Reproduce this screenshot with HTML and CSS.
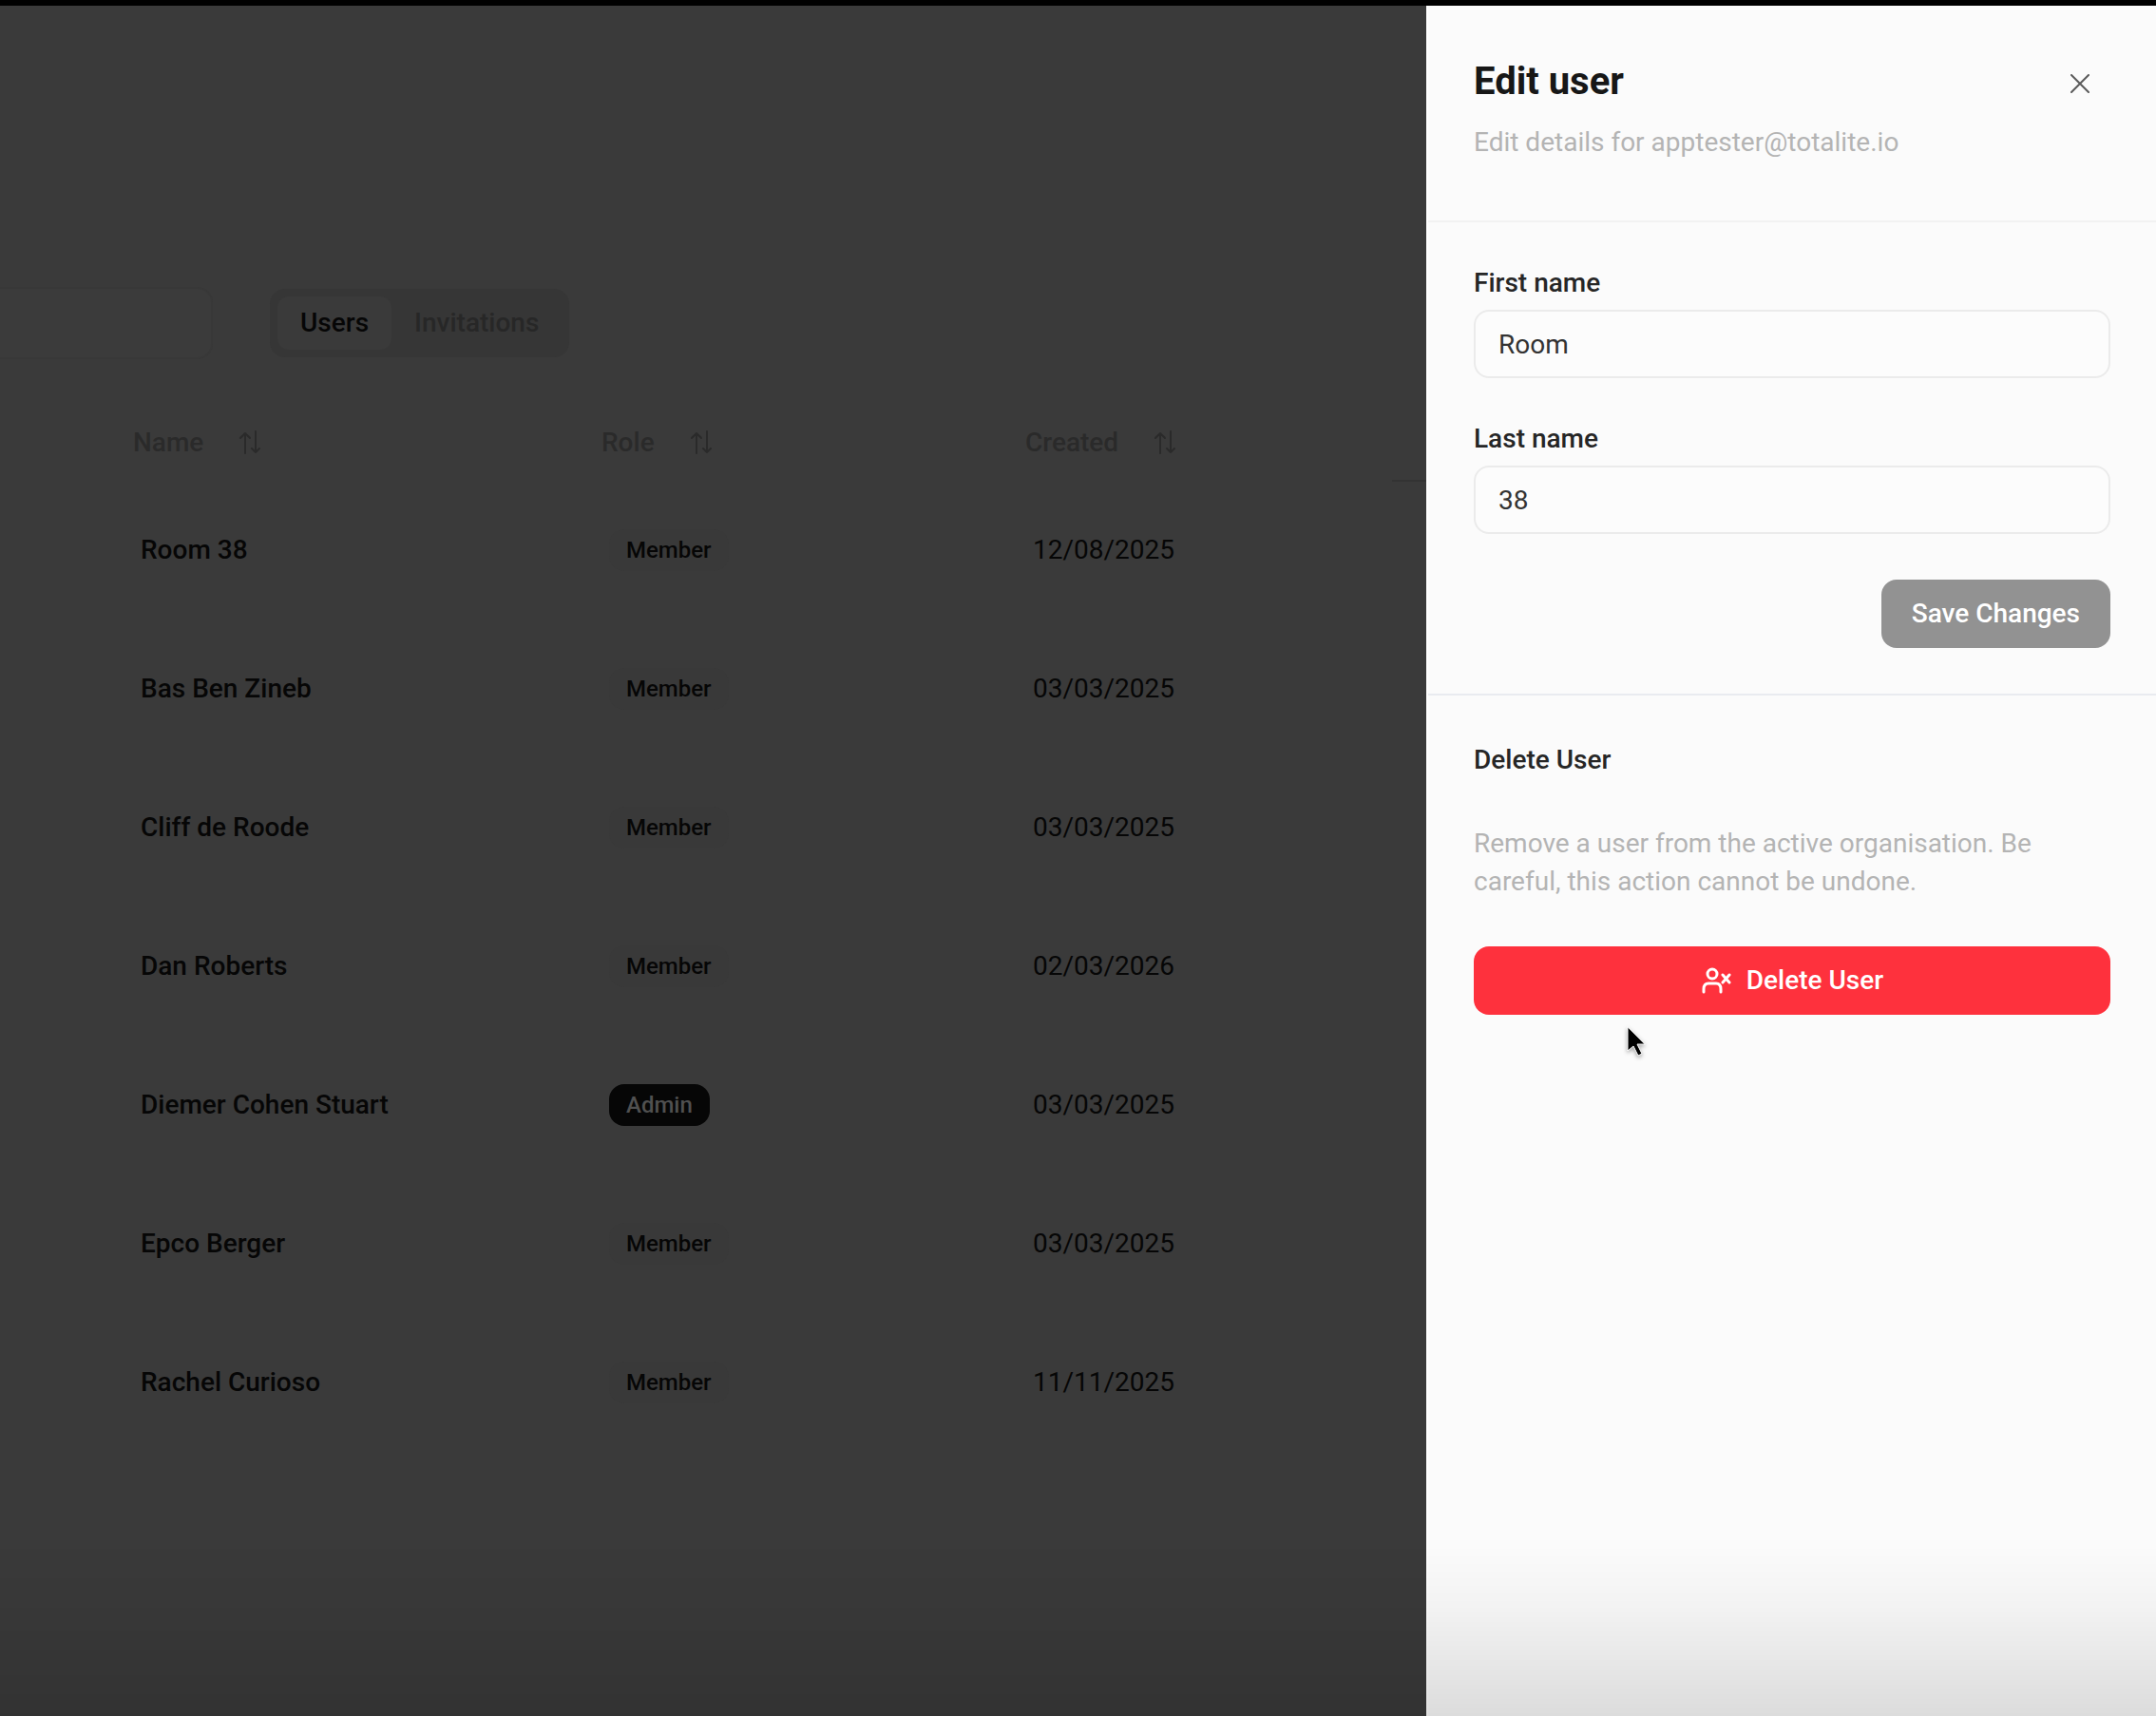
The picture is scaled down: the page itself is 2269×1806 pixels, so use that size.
FILE: index.html
```html
<!DOCTYPE html>
<html lang="en">
<head>
<meta charset="utf-8">
<title>Edit user</title>
<link rel="stylesheet" href="styles.css">
</head>
<body>
<svg class="sprite" aria-hidden="true">
  <symbol id="sort" viewBox="0 0 24 26"><path d="M2 8l5-5 5 5M7 3v21M14 19l4 4 4-4M18 23V1"/></symbol>
</svg>
<div class="app">
  <main class="page">
    <div class="toolbar">
      <input class="search" type="search" aria-label="Search users">
      <div class="tabs" role="tablist">
        <button class="tab tab-active" role="tab" aria-selected="true">Users</button>
        <button class="tab" role="tab" aria-selected="false">Invitations</button>
      </div>
    </div>
    <table class="users">
      <colgroup><col class="col-name"><col class="col-role"><col class="col-created"><col></colgroup>
      <thead>
        <tr>
          <th scope="col"><button class="sort">Name <svg class="sort-icon"><use href="#sort"/></svg></button></th>
          <th scope="col"><button class="sort">Role <svg class="sort-icon"><use href="#sort"/></svg></button></th>
          <th scope="col"><button class="sort">Created <svg class="sort-icon"><use href="#sort"/></svg></button></th>
          <td class="actions"></td>
        </tr>
      </thead>
      <tbody>
        <tr><td class="name">Room 38</td><td><span class="badge">Member</span></td><td>12/08/2025</td><td></td></tr>
        <tr><td class="name">Bas Ben Zineb</td><td><span class="badge">Member</span></td><td>03/03/2025</td><td></td></tr>
        <tr><td class="name">Cliff de Roode</td><td><span class="badge">Member</span></td><td>03/03/2025</td><td></td></tr>
        <tr><td class="name">Dan Roberts</td><td><span class="badge">Member</span></td><td>02/03/2026</td><td></td></tr>
        <tr><td class="name">Diemer Cohen Stuart</td><td><span class="badge badge-admin">Admin</span></td><td>03/03/2025</td><td></td></tr>
        <tr><td class="name">Epco Berger</td><td><span class="badge">Member</span></td><td>03/03/2025</td><td></td></tr>
        <tr><td class="name">Rachel Curioso</td><td><span class="badge">Member</span></td><td>11/11/2025</td><td></td></tr>
      </tbody>
    </table>
  </main>
  <aside class="sheet" role="dialog" aria-labelledby="sheet-title">
    <header class="sheet-header">
      <div>
        <h1 class="sheet-title" id="sheet-title">Edit user</h1>
        <p class="muted">Edit details for apptester@totalite.io</p>
      </div>
      <button class="close" aria-label="Close"><svg class="close-icon" viewBox="0 0 20 20"><path d="M1 1l18 18M19 1L1 19"/></svg></button>
    </header>
    <form class="section form">
      <div class="field">
        <label class="label" for="first-name">First name</label>
        <input class="input" id="first-name" type="text" value="Room">
      </div>
      <div class="field">
        <label class="label" for="last-name">Last name</label>
        <input class="input" id="last-name" type="text" value="38">
      </div>
      <button class="button save" type="submit" disabled>Save Changes</button>
    </form>
    <section class="section danger">
      <h2 class="section-title">Delete User</h2>
      <p class="muted">Remove a user from the active organisation. Be careful, this action cannot be undone.</p>
      <button class="button delete" type="button">
        <svg class="user-icon" viewBox="0 0 32 32"><circle cx="12" cy="9" r="5"/><path d="M3 28v-3c0-4 2-6 5-6h8c3 0 5 2 5 6v3M23 10l7 8M30 10l-7 8"/></svg>
        Delete User
      </button>
    </section>
  </aside>
</div>
<div class="fade"></div>
<svg class="cursor" viewBox="0 0 24 36" aria-hidden="true"><path d="M3 2v25l6-5 5 10 4-2-5-10h8z"/></svg>
</body>
</html>
```
FILE: styles.css
```css
* {
  box-sizing: border-box;
}

body {
  margin: 0;
  background: #3a3a3a;
  color: #060606;
  font-family: Roboto, "Noto Sans", sans-serif;
  font-size: 28px;
  line-height: 40px;
}

h1,
h2,
p {
  margin: 0;
}

button,
input {
  margin: 0;
  font: inherit;
}

svg {
  fill: none;
  stroke: currentColor;
  stroke-width: 2;
  stroke-linecap: round;
  stroke-linejoin: round;
}

.sprite {
  display: none;
}

.app {
  display: flex;
  min-height: 100vh;
  border-top: 6px solid #000;
}

/* Dimmed page behind the sheet */
.page {
  flex: 1;
  min-width: 0;
  padding-top: 296px;
}

.toolbar {
  display: flex;
  align-items: center;
  gap: 60px;
}

.search {
  width: 224px;
  height: 76px;
  padding: 0 24px;
  border: 2px solid #383838;
  border-left: 0;
  border-radius: 0 16px 16px 0;
  background: #3b3b3b;
}

.tabs {
  display: flex;
  padding: 8px;
  border-radius: 16px;
  background: #363636;
}

.tab {
  padding: 8px 24px;
  border: 0;
  border-radius: 12px;
  background: none;
  color: #272727;
  font-weight: 500;
}

.tab-active {
  background: #3a3a3a;
  color: #060606;
}

.users {
  width: 100%;
  margin-top: 48px;
  border-collapse: collapse;
  table-layout: fixed;
}

.col-name {
  width: 625px;
}

.col-role {
  width: 446px;
}

.col-created {
  width: 394px;
}

.users th,
.users td {
  padding: 0 16px;
  text-align: left;
}

.users th:first-child,
.users td:first-child {
  padding-left: 148px;
}

.users thead tr {
  height: 80px;
}

.users tbody tr {
  height: 146px;
}

.users .actions {
  border-bottom: 2px solid #333;
}

.users .name {
  font-weight: 500;
}

.sort {
  display: flex;
  align-items: center;
  gap: 36px;
  margin-left: -8px;
  padding: 0;
  border: 0;
  background: none;
  color: #2a2a2a;
  font-weight: 500;
}

.sort-icon {
  width: 26px;
  height: 26px;
}

.badge {
  display: inline-block;
  padding: 6px 18px;
  border-radius: 16px;
  background: #393939;
  font-size: 24px;
  font-weight: 500;
  line-height: 32px;
  vertical-align: middle;
}

.badge-admin {
  background: #060606;
  color: #505050;
}

/* Sheet */
.sheet {
  flex: none;
  width: 768px;
  border-left: 2px solid #fff;
  background: #fbfbfb;
  color: #262626;
}

.sheet-header {
  display: flex;
  justify-content: space-between;
  align-items: flex-start;
  padding: 52px 48px 62px;
  border-bottom: 2px solid #f2f2f2;
}

.sheet-title {
  margin-bottom: 16px;
  color: #171717;
  font-size: 40px;
  font-weight: 700;
  line-height: 56px;
}

.muted {
  color: #b4b4b4;
}

.close {
  display: flex;
  margin-top: 12px;
  padding: 8px 22px;
  border: 0;
  background: none;
  color: #5a5a5a;
}

.close-icon {
  width: 20px;
  height: 20px;
}

.section {
  padding: 48px;
}

.form {
  display: flex;
  flex-direction: column;
  gap: 48px;
  border-bottom: 2px solid #e9ebf0;
}

.field {
  display: flex;
  flex-direction: column;
  gap: 12px;
}

.label {
  font-weight: 500;
  line-height: 32px;
}

.section-title {
  font-size: 28px;
  font-weight: 500;
  line-height: 40px;
}

.input {
  width: 100%;
  height: 72px;
  padding: 0 24px;
  border: 2px solid #ebebeb;
  border-radius: 16px;
  background: #fcfcfc;
  color: #333;
}

.button {
  display: flex;
  justify-content: center;
  align-items: center;
  gap: 16px;
  height: 72px;
  padding: 0 32px;
  border: 0;
  border-radius: 16px;
  color: #fff;
  font-weight: 500;
}

.save {
  align-self: flex-end;
  background: #929292;
}

.danger {
  display: flex;
  flex-direction: column;
  gap: 48px;
}

.delete {
  background: #fe313d;
}

.user-icon {
  width: 32px;
  height: 32px;
  stroke-width: 3;
}

/* Shade along the window's lower edge */
.fade {
  position: fixed;
  right: 0;
  bottom: 0;
  left: 0;
  height: 180px;
  background: linear-gradient(transparent, rgb(0 0 0 / 3%) 35%, rgb(0 0 0 / 12%));
  pointer-events: none;
}

.cursor {
  position: absolute;
  top: 1079px;
  left: 1710px;
  width: 24px;
  height: 36px;
  fill: #000;
  stroke: #fff;
  stroke-width: 1;
  filter: drop-shadow(0 2px 2px rgb(0 0 0 / 35%));
}
```
